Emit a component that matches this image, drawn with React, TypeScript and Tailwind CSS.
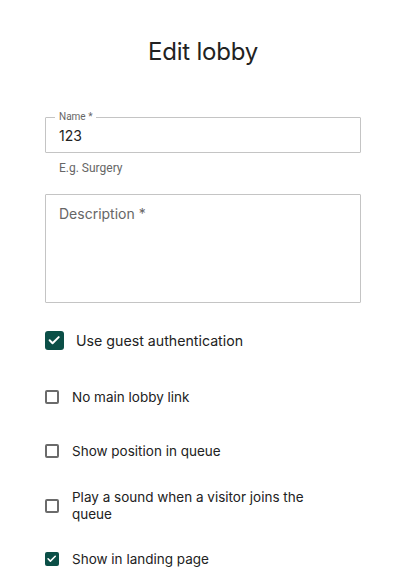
import React from "react";

const green = "bg-[#0b4f47]";

function Check({ size }: { size: number }) {
  return (
    <svg width={size * 0.74} height={size * 0.74} viewBox="0 0 24 24" fill="none">
      <path d="M4.5 12.5l5 5L20 7" stroke="white" strokeWidth="3.4" strokeLinecap="round" strokeLinejoin="round" />
    </svg>
  );
}

function Box({ checked, big }: { checked: boolean; big?: boolean }) {
  if (big) {
    return (
      <div className={`w-[19px] h-[19px] rounded-[3px] ${green} flex items-center justify-center shrink-0`}>
        <Check size={19} />
      </div>
    );
  }
  if (checked) {
    return (
      <div className={`w-[14px] h-[14px] rounded-[2px] ${green} flex items-center justify-center shrink-0`}>
        <Check size={15} />
      </div>
    );
  }
  return <div className="w-[14px] h-[14px] rounded-[2px] border-2 border-[#6b6b6b] shrink-0" />;
}

export default function App() {
  const font = { fontFamily: "Inter, 'Noto Sans', sans-serif" };
  return (
    <div className="w-[417px] h-[587px] bg-white text-[#222] overflow-hidden" style={font}>
      <div className="px-[45px] w-[406px] flex flex-col">
        <h1 className="text-center text-[24px] leading-none mt-[40px] text-[#222] tracking-[-0.2px]">Edit lobby</h1>

        {/* Name field with notched outline */}
        <div className="relative mt-[53px] h-[36px] border border-[#c4c4c4] rounded-[1px] flex items-center pl-[13px]">
          <span
            className="absolute -top-[8px] left-[9px] bg-white px-[4px] text-[10px] text-[#666] leading-[14px]"
            style={{ fontFamily: "Roboto, sans-serif" }}
          >
            Name *
          </span>
          <span className="text-[14px] leading-[17px] text-[#222]">123</span>
        </div>
        <div className="pl-[14px] mt-[7px] text-[12px] text-[#666] leading-[16px]" style={{ fontFamily: "Roboto, sans-serif" }}>
          E.g. Surgery
        </div>

        {/* Description textarea */}
        <div className="mt-[18px] h-[109px] border border-[#c4c4c4] rounded-[1px] pl-[13px] pt-[10px]">
          <div className="text-[14px] leading-[17px] text-[#666]">Description *</div>
        </div>

        <div className="mt-[28px] h-[19px] flex items-center gap-[12px]">
          <Box checked big />
          <span className="text-[14.2px] leading-[17px] text-[#222]">Use guest authentication</span>
        </div>

        <div className="mt-[40px] h-[14px] flex items-center gap-[13px]">
          <Box checked={false} />
          <span className="text-[13.5px] leading-[17px] text-[#222]">No main lobby link</span>
        </div>

        <div className="mt-[40px] h-[14px] flex items-center gap-[13px]">
          <Box checked={false} />
          <span className="text-[13.5px] leading-[17px] text-[#222]">Show position in queue</span>
        </div>

        <div className="mt-[31px] flex items-center gap-[13px]">
          <Box checked={false} />
          <span className="text-[13.5px] leading-[17px] text-[#222] w-[250px]">
            Play a sound when a visitor joins the queue
          </span>
        </div>

        <div className="mt-[29px] h-[14px] flex items-center gap-[13px]">
          <Box checked />
          <span className="text-[13.5px] leading-[17px] text-[#222]">Show in landing page</span>
        </div>
      </div>
    </div>
  );
}
